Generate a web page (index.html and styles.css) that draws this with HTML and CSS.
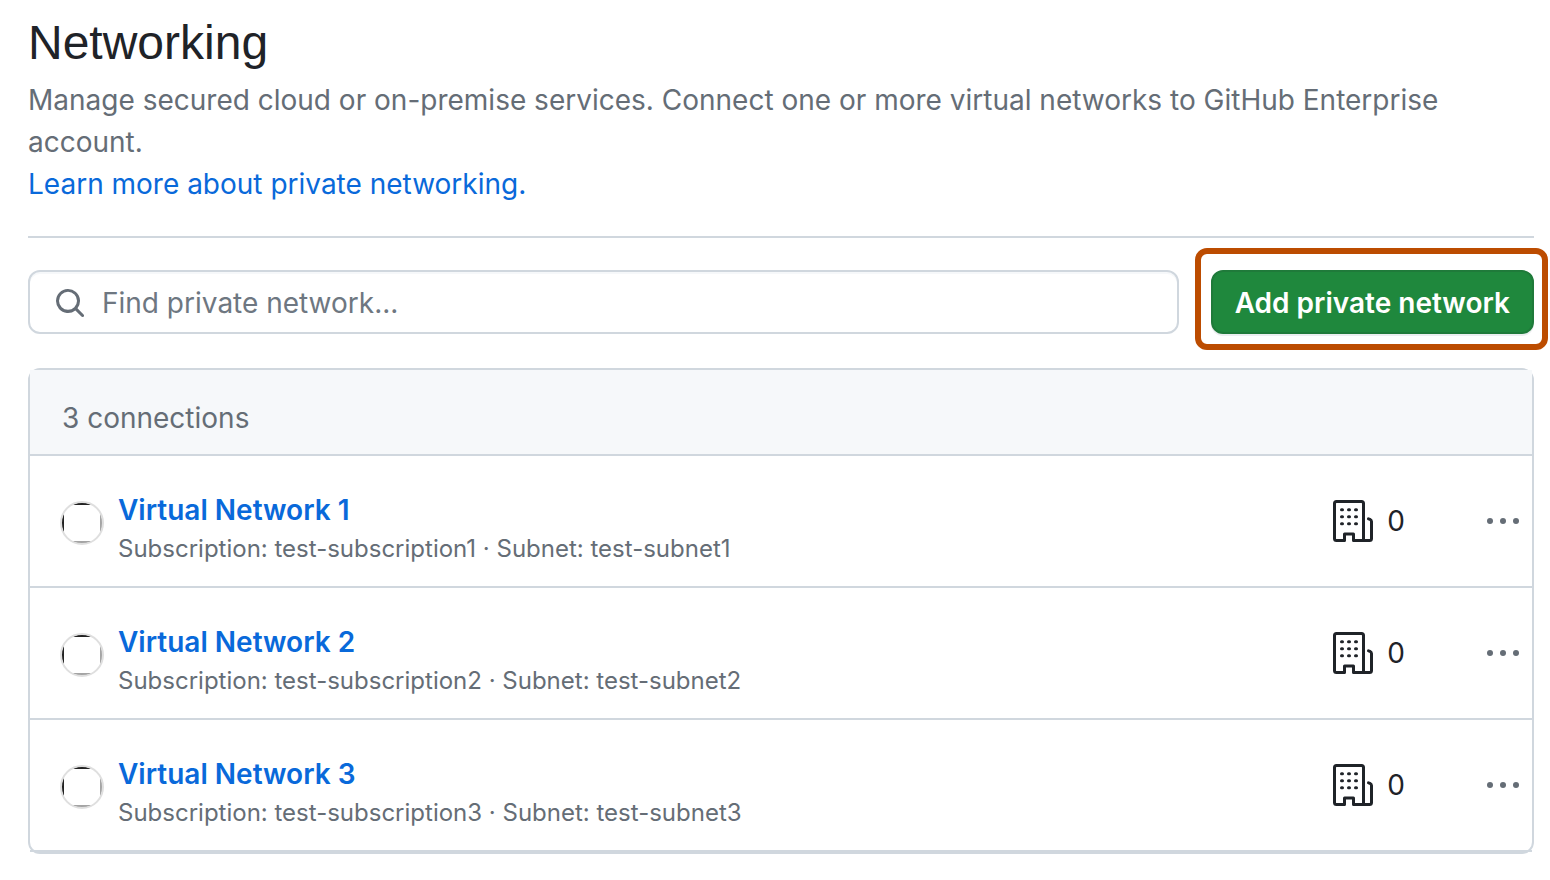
FILE: index.html
```html
<!DOCTYPE html>
<html lang="en">
<head>
<meta charset="utf-8">
<meta name="viewport" content="width=device-width, initial-scale=1">
<title>Networking</title>
<link rel="stylesheet" href="styles.css">
</head>
<body>
<svg class="sprite" aria-hidden="true">
  <defs>
    <linearGradient id="sliver" x1="0" y1="0" x2="1" y2="1">
      <stop offset="0.4" stop-color="#222"/>
      <stop offset="0.6" stop-color="#a4a4a4"/>
    </linearGradient>
    <symbol id="avatar" viewBox="0 0 44 44">
      <circle cx="22" cy="22" r="20.500" fill="url(#sliver)"/>
      <rect x="4" y="4" width="36" height="36" fill="#fff"/>
      <circle cx="22" cy="22" r="21" fill="none" stroke="#dfdfdf" stroke-width="2"/>
    </symbol>
    <symbol id="organization" viewBox="0 0 48 48">
      <path d="M34.500 43.500V6.500a2 2 0 0 0-2-2h-25a2 2 0 0 0-2 2v35a2 2 0 0 0 2 2h8v-6.500h9v6.500h16a2 2 0 0 0 2-2V24.500a2.500 2.500 0 0 0-1.500-2.200L39.500 21.800" fill="none" stroke="#1f2328" stroke-width="3" stroke-linecap="round" stroke-linejoin="round"/>
      <path d="M12.500 12.700h1M19.500 12.700h1M26.500 12.700h1M12.500 19.700h1M19.500 19.700h1M26.500 19.700h1M12.500 26.700h1M19.500 26.700h1M26.500 26.700h1" stroke="#1f2328" stroke-width="3" stroke-linecap="round"/>
    </symbol>
    <symbol id="kebab" viewBox="0 0 32 32">
      <circle cx="3" cy="16" r="3"/><circle cx="16" cy="16" r="3"/><circle cx="29" cy="16" r="3"/>
    </symbol>
  </defs>
</svg>
<main class="page">
  <header class="intro">
    <h1 class="title">Networking</h1>
    <p class="lead">Manage secured cloud or on-premise services. Connect one or more virtual networks to GitHub Enterprise account.</p>
    <a class="learn" href="#">Learn more about private networking.</a>
  </header>
  <div class="toolbar">
    <label class="search">
      <svg class="search-icon" viewBox="0 0 16 16" aria-hidden="true"><path d="M10.68 11.74a6 6 0 0 1-7.922-8.982 6 6 0 0 1 8.982 7.922l3.04 3.04a.749.749 0 0 1-.326 1.275.749.749 0 0 1-.734-.215ZM11.500 7a4.499 4.499 0 1 0-8.997 0A4.499 4.499 0 0 0 11.500 7Z"/></svg>
      <input class="search-input" type="text" placeholder="Find private network..." aria-label="Find private network">
    </label>
    <div class="highlight"><button class="add" type="button">Add private network</button></div>
  </div>
  <section class="box">
    <h2 class="box-header">3 connections</h2>
    <ul class="list">
      <li class="row">
        <svg class="avatar" aria-hidden="true"><use href="#avatar"/></svg>
        <div class="info"><a class="name" href="#">Virtual Network 1</a><p class="meta">Subscription: test-subscription1 · Subnet: test-subnet1</p></div>
        <div class="count"><svg class="org" aria-hidden="true"><use href="#organization"/></svg><span>0</span></div>
        <button class="more" type="button" aria-label="Options for Virtual Network 1"><svg class="dots" aria-hidden="true"><use href="#kebab"/></svg></button>
      </li>
      <li class="row">
        <svg class="avatar" aria-hidden="true"><use href="#avatar"/></svg>
        <div class="info"><a class="name" href="#">Virtual Network 2</a><p class="meta">Subscription: test-subscription2 · Subnet: test-subnet2</p></div>
        <div class="count"><svg class="org" aria-hidden="true"><use href="#organization"/></svg><span>0</span></div>
        <button class="more" type="button" aria-label="Options for Virtual Network 2"><svg class="dots" aria-hidden="true"><use href="#kebab"/></svg></button>
      </li>
      <li class="row">
        <svg class="avatar" aria-hidden="true"><use href="#avatar"/></svg>
        <div class="info"><a class="name" href="#">Virtual Network 3</a><p class="meta">Subscription: test-subscription3 · Subnet: test-subnet3</p></div>
        <div class="count"><svg class="org" aria-hidden="true"><use href="#organization"/></svg><span>0</span></div>
        <button class="more" type="button" aria-label="Options for Virtual Network 3"><svg class="dots" aria-hidden="true"><use href="#kebab"/></svg></button>
      </li>
    </ul>
  </section>
</main>
</body>
</html>
```

FILE: styles.css
```css
* { box-sizing: border-box; }
body {
  margin: 0;
  background: #fff;
  color: #1f2328;
  font: 400 28px/42px Inter, "Liberation Sans", sans-serif;
}
h1, h2, p, ul { margin: 0; padding: 0; }
a { color: #0969da; text-decoration: none; }
button { font: inherit; cursor: pointer; }
.sprite { position: absolute; width: 0; height: 0; }
.page { padding: 7px 16px 24px 28px; }
.intro { padding-bottom: 31px; border-bottom: 2px solid #d0d7de; }
.title { font-family: "Liberation Sans", Arial, sans-serif; font-size: 48px; line-height: 72px; font-weight: 400; }
.lead { color: #656d76; }
.learn { display: block; }
.toolbar { display: flex; gap: 32px; margin: 32px 0 34px; }
.search {
  flex: 1;
  min-width: 0;
  display: flex;
  align-items: center;
  gap: 16px;
  height: 64px;
  padding: 2px 24px 0;
  border: 2px solid #d0d7de;
  border-radius: 12px;
  box-shadow: inset 0 2px 0 #f6f8fa;
}
.search-icon { flex: none; width: 32px; height: 32px; fill: #656d76; }
.search-input {
  flex: 1;
  min-width: 0;
  padding: 0;
  border: 0;
  outline: 0;
  background: none;
  color: inherit;
  font: inherit;
}
.search-input::placeholder { color: #6e7781; opacity: 1; }
.highlight { position: relative; }
.highlight::after {
  content: "";
  position: absolute;
  inset: -22px -14px -16px -16px;
  border: 6px solid #bc4c00;
  border-radius: 12px;
  pointer-events: none;
}
.add {
  height: 64px;
  padding: 2px 22px 0;
  border: 2px solid #1f7a3a;
  border-radius: 12px;
  background: #1f883d;
  box-shadow: 0 2px 0 #eceef0;
  color: #fff;
  font-weight: 600;
}
.box { border: 2px solid #d0d7de; border-radius: 12px; }
.box-header {
  padding: 27px 32px 15px;
  border-bottom: 2px solid #d0d7de;
  background: #f6f8fa;
  color: #656d76;
  font-size: 28px;
  font-weight: 400;
}
.list { list-style: none; }
.row {
  display: flex;
  align-items: center;
  padding: 19px 13px 19px 30px;
  border-bottom: 2px solid #d0d7de;
}
.avatar { flex: none; width: 44px; height: 44px; margin-top: 4px; }
.info { flex: 1; min-width: 0; padding: 14px 16px 0 14px; }
.name { display: block; font-weight: 600; }
.meta { color: #656d76; font-size: 24px; line-height: 36px; }
.count { display: flex; align-items: center; gap: 10px; margin-right: 82px; }
.org { width: 48px; height: 48px; }
.more { display: flex; padding: 0; border: 0; background: none; }
.dots { width: 32px; height: 32px; fill: #656d76; }
```
